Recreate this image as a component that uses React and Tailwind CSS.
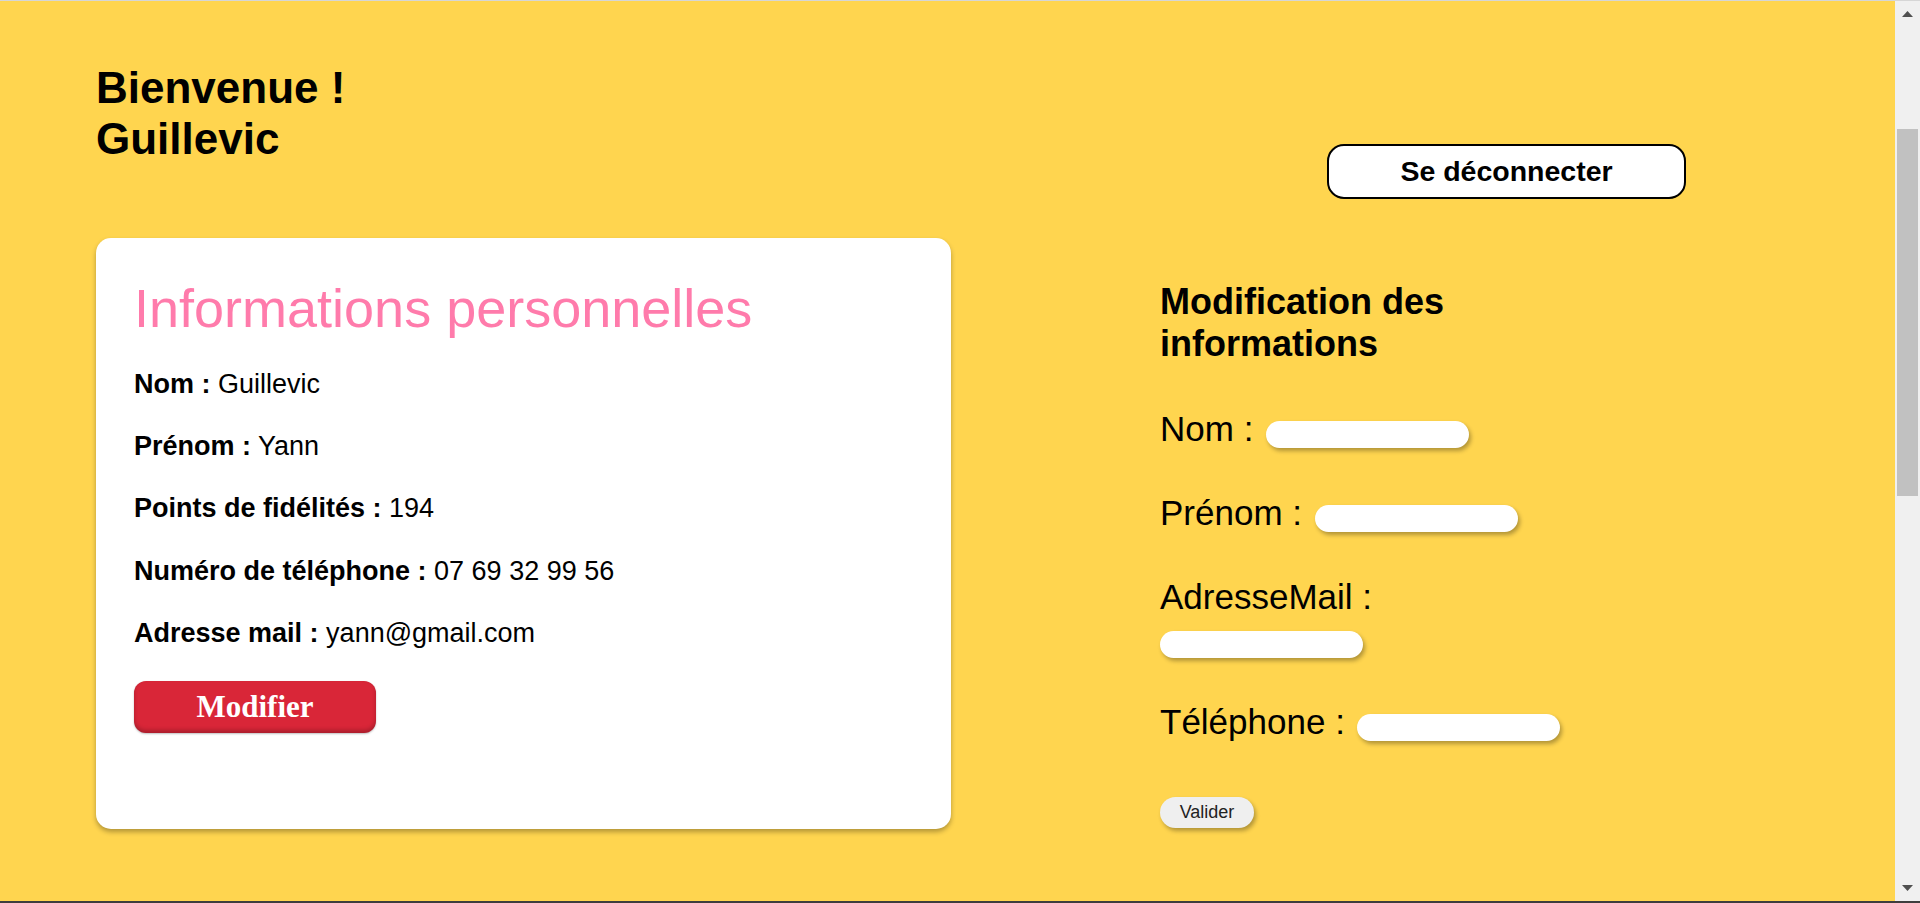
import React from "react";

const sans = { fontFamily: '"Liberation Sans", Arial, sans-serif' };

function InfoRow({ label, value }) {
  return (
    <div className="text-[27px] leading-[31px] text-black whitespace-nowrap">
      <span className="font-bold">{label} :</span> {value}
    </div>
  );
}

function Field({ label, wrap }) {
  const input = (
    <input
      type="text"
      className="block w-[203px] h-[27px] rounded-full bg-white border-0 outline-none shadow-[2px_3px_4px_rgba(0,0,0,0.3)]"
    />
  );
  if (wrap) {
    return (
      <div className="flex flex-col">
        <div className="text-[35px] leading-[41px] text-black">{label} :</div>
        <div className="h-[41px] pt-[13.5px]">{input}</div>
      </div>
    );
  }
  return (
    <div className="flex items-start">
      <span className="text-[35px] leading-[41px] text-black whitespace-nowrap">{label} :</span>
      <div className="ml-[12.5px] mt-[13px]">{input}</div>
    </div>
  );
}

export default function App() {
  return (
    <div
      className="flex h-[903px] w-full overflow-hidden border-t border-[#d6d6d6] border-b-2 border-b-[#3e3e3e]"
      style={sans}
    >
      <main className="flex-1 bg-[#ffd54f] pl-[96px] pt-[61px]">
        <div className="flex items-start">
          <h1 className="w-[1231px] text-[44px] leading-[51px] font-bold text-black">
            Bienvenue !<br />
            Guillevic
          </h1>
          <button className="mt-[82px] w-[359px] h-[55px] rounded-[17px] border-2 border-black bg-white text-[28.5px] font-bold text-black">
            Se déconnecter
          </button>
        </div>

        <div className="mt-[39px] flex items-start">
          <section className="w-[855px] h-[591px] rounded-[15px] bg-white pl-[38px] pt-[39px] shadow-[0_3px_5px_rgba(0,0,0,0.3)]">
            <h2 className="text-[54px] leading-[62px] text-[#ff7bab] font-normal whitespace-nowrap">
              Informations personnelles
            </h2>
            <div className="mt-[30px] flex flex-col gap-[31.2px]">
              <InfoRow label="Nom" value="Guillevic" />
              <InfoRow label="Prénom" value="Yann" />
              <InfoRow label="Points de fidélités" value="194" />
              <InfoRow label="Numéro de téléphone" value="07 69 32 99 56" />
              <InfoRow label="Adresse mail" value="yann@gmail.com" />
            </div>
            <button
              className="mt-[32px] w-[242px] h-[52px] rounded-[12px] bg-[#d92638] text-white text-[31px] font-bold shadow-[inset_0_-3px_4px_rgba(0,0,0,0.22),0_1px_2px_rgba(0,0,0,0.25)]"
              style={{ fontFamily: '"Liberation Serif", "Times New Roman", serif' }}
            >
              Modifier
            </button>
          </section>

          <section className="ml-[209px] w-[410px] pt-[43px]">
            <h3 className="text-[36px] leading-[42px] font-bold text-black">
              Modification des informations
            </h3>
            <div className="mt-[43px] flex flex-col gap-[43px]">
              <Field label="Nom" />
              <Field label="Prénom" />
              <Field label="AdresseMail" wrap />
              <Field label="Téléphone" />
            </div>
            <button className="mt-[54.5px] w-[94px] h-[31px] rounded-full bg-[#efefef] text-[18px] text-[#222] shadow-[2px_3px_4px_rgba(0,0,0,0.3)]">
              Valider
            </button>
          </section>
        </div>
      </main>

      <aside className="w-[25px] bg-[#f0f0f0] flex flex-col items-center">
        <div className="h-[26px] flex items-center justify-center">
          <svg width="11" height="6" viewBox="0 0 11 6">
            <path d="M5.5 0 L11 6 L0 6 Z" fill="#505050" />
          </svg>
        </div>
        <div className="mt-[102px] w-[21px] h-[367px] bg-[#c1c1c1]" />
        <div className="flex-1" />
        <div className="h-[26px] flex items-center justify-center">
          <svg width="11" height="6" viewBox="0 0 11 6">
            <path d="M0 0 L11 0 L5.5 6 Z" fill="#505050" />
          </svg>
        </div>
      </aside>
    </div>
  );
}
